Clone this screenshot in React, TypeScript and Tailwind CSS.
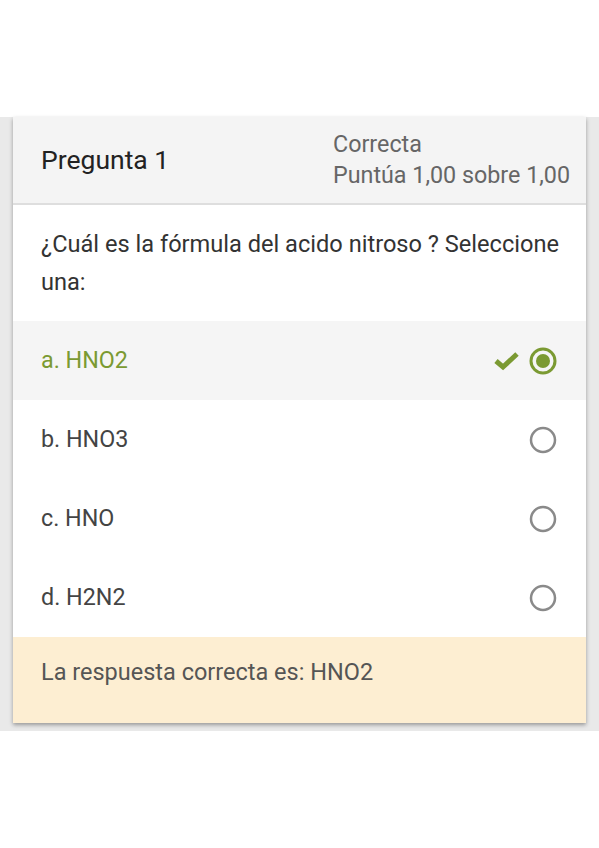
import React from "react";

const Radio = ({ checked }: { checked?: boolean }) =>
  checked ? (
    <svg width="30" height="30" viewBox="0 0 30 30">
      <circle cx="15" cy="15" r="12" fill="none" stroke="#7b9a32" strokeWidth="3" />
      <circle cx="15" cy="15" r="7" fill="#7b9a32" />
    </svg>
  ) : (
    <svg width="30" height="30" viewBox="0 0 30 30">
      <circle cx="15" cy="15" r="12" fill="none" stroke="#8a8a8a" strokeWidth="2.5" />
    </svg>
  );

const Check = () => (
  <svg width="26" height="22" viewBox="0 0 26 22">
    <path d="M2 11 L9 17 L23 4" fill="none" stroke="#7b9a32" strokeWidth="5" strokeLinejoin="miter" />
  </svg>
);

export default function App() {
  const options = [
    { label: "a. HNO2", correct: true },
    { label: "b. HNO3" },
    { label: "c. HNO" },
    { label: "d. H2N2" },
  ];
  return (
    <div className="w-[599px] h-[848px] bg-white" style={{ fontFamily: "Roboto, 'Liberation Sans', sans-serif" }}>
      <div className="h-[117px]" />
      <div className="bg-[#e9e9e9] px-[13px] pb-[8px]">
        <div className="bg-white shadow-[0_2px_4px_rgba(0,0,0,0.35)]">
          <div className="h-[88px] bg-[#f4f4f4] border-b-2 border-[#dedede] flex items-center justify-between pl-[28px] pr-[12px]">
            <div className="text-[26.5px] text-[#222]">Pregunta 1</div>
            <div className="text-[23.3px] leading-[31px] text-[#666] w-[241px] whitespace-nowrap">
              <div>Correcta</div>
              <div>Puntúa 1,00 sobre 1,00</div>
            </div>
          </div>
          <div className="pl-[28px] pr-[10px] pt-[20px] pb-[20px] text-[23.6px] leading-[38px] text-[#333]">
            ¿Cuál es la fórmula del acido nitroso ? Seleccione una:
          </div>
          {options.map((o) => (
            <div
              key={o.label}
              className={`h-[79px] flex items-center justify-between pl-[28px] pr-[28px] text-[23.3px] ${
                o.correct ? "bg-[#f5f5f5] text-[#7b9a32]" : "text-[#444]"
              }`}
            >
              <span>{o.label}</span>
              <div className="flex items-center gap-[8px]">
                {o.correct && <Check />}
                <Radio checked={o.correct} />
              </div>
            </div>
          ))}
          <div className="h-[86px] bg-[#fdeed2] pt-[20px] pl-[28px] text-[23.5px] leading-[31px] text-[#555]">
            La respuesta correcta es: HNO2
          </div>
        </div>
      </div>
    </div>
  );
}
